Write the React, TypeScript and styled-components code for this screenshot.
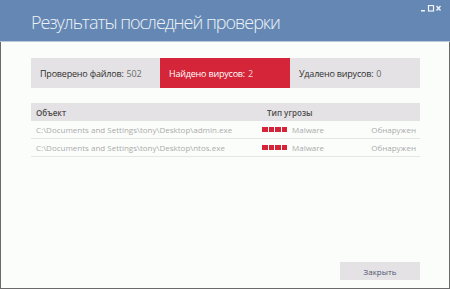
import React from "react";
import styled, { createGlobalStyle } from "styled-components";

const Global = createGlobalStyle`
  html, body { margin: 0; padding: 0; background: #fbfdfb; }
  body { font-family: "Open Sans", "Noto Sans", sans-serif; }
`;

const Window = styled.div`
  width: 450px;
  height: 289px;
  box-sizing: border-box;
  border: 1px solid #6a6a6a;
  border-top: none;
  background: #fbfdfb;
  display: flex;
  flex-direction: column;
`;

const Header = styled.div`
  height: 41px;
  background: #6488b3;
  border-bottom: 1px solid #b7c8da;
  position: relative;
  display: flex;
  align-items: center;
  flex-shrink: 0;
  margin: 0 -1px;
  padding-left: 31px;
`;

const Title = styled.h1`
  margin: 0;
  font-family: "Open Sans", sans-serif;
  font-weight: 300;
  font-size: 18px;
  color: #eef2f7;
  letter-spacing: -1px;
  padding-top: 2px;
`;

const Controls = styled.div`
  position: absolute;
  top: 5px;
  right: 9px;
  display: flex;
`;

const Body = styled.div`
  flex: 1;
  display: flex;
  flex-direction: column;
  padding: 16px 29px 8px 30px;
`;

const Stats = styled.div`
  display: grid;
  grid-template-columns: 129px 130px 130px;
  height: 30px;
`;

const Stat = styled.div<{ $active?: boolean }>`
  background: ${(p) => (p.$active ? "#d42638" : "#e4e2e5")};
  color: ${(p) => (p.$active ? "#ffffff" : "#2f2f2f")};
  display: flex;
  align-items: center;
  padding-left: 9px;
  font-size: 9px;
  letter-spacing: -0.2px;
  white-space: nowrap;
`;

const StatValue = styled.span<{ $active?: boolean }>`
  color: ${(p) => (p.$active ? "#f6d0d4" : "#6a6a6a")};
  margin-left: 3px;
`;

const Table = styled.div`
  margin-top: 15px;
  display: flex;
  flex-direction: column;
`;

const HeadRow = styled.div`
  display: grid;
  grid-template-columns: 231px 1fr;
  height: 18px;
  align-items: center;
  background: #e4e2e5;
  padding-left: 5px;
  font-size: 8px;
  font-weight: 600;
  color: #4e4e4e;
`;

const Row = styled.div`
  display: grid;
  grid-template-columns: 226px 1fr auto;
  height: 17px;
  align-items: center;
  border-bottom: 1px solid #e6e6e6;
  padding: 0 4px 0 5px;
  font-size: 8px;
  color: #ababab;
  white-space: nowrap;
`;

const Threat = styled.div`
  display: flex;
  align-items: center;
`;

const Level = styled.div`
  display: flex;
  gap: 1px;
  margin-right: 5px;
`;

const Block = styled.span`
  width: 5.5px;
  height: 5px;
  background: #d42638;
`;

const Footer = styled.div`
  margin-top: auto;
  display: flex;
  justify-content: flex-end;
`;

const Button = styled.button`
  width: 80px;
  height: 18px;
  border: none;
  background: #e4e2e5;
  color: #4b5772;
  font-family: "Open Sans", sans-serif;
  font-size: 8px;
  padding: 0;
`;

const rows = [
  "C:\\Documents and Settings\\tony\\Desktop\\admin.exe",
  "C:\\Documents and Settings\\tony\\Desktop\\ntos.exe",
];

export default function App() {
  return (
    <Window>
      <Global />
      <Header>
        <Title>Результаты последней проверки</Title>
        <Controls>
          <svg width="20" height="7" viewBox="0 0 20 7">
            <rect x="0" y="5" width="4" height="1.5" fill="#f2f5f9" />
            <rect x="7.5" y="0.5" width="5" height="5.5" fill="none" stroke="#f2f5f9" strokeWidth="1.2" />
            <path d="M15.5 1 L19.5 5.5 M19.5 1 L15.5 5.5" stroke="#f2f5f9" strokeWidth="1.3" />
          </svg>
        </Controls>
      </Header>
      <Body>
        <Stats>
          <Stat>
            Проверено файлов:<StatValue>502</StatValue>
          </Stat>
          <Stat $active>
            Найдено вирусов:<StatValue $active>2</StatValue>
          </Stat>
          <Stat>
            Удалено вирусов:<StatValue>0</StatValue>
          </Stat>
        </Stats>
        <Table>
          <HeadRow>
            <span>Объект</span>
            <span>Тип угрозы</span>
          </HeadRow>
          {rows.map((r) => (
            <Row key={r}>
              <span>{r}</span>
              <Threat>
                <Level>
                  <Block />
                  <Block />
                  <Block />
                  <Block />
                </Level>
                Malware
              </Threat>
              <span>Обнаружен</span>
            </Row>
          ))}
        </Table>
        <Footer>
          <Button>Закрыть</Button>
        </Footer>
      </Body>
    </Window>
  );
}
